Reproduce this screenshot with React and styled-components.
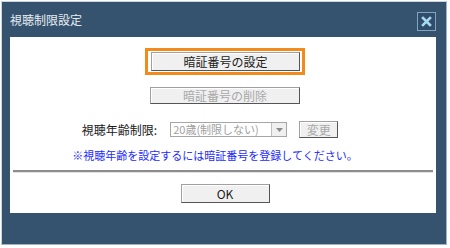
import React from "react";
import styled, { createGlobalStyle } from "styled-components";

const GlobalStyle = createGlobalStyle`
  html, body {
    margin: 0;
    padding: 0;
    background: #ffffff;
  }
  body {
    font-family: "Noto Sans CJK JP", "Noto Sans", sans-serif;
  }
`;

const Page = styled.div`
  padding: 1px 0 0 1px;
`;

const Frame = styled.div`
  width: 446px;
  height: 244px;
  box-sizing: border-box;
  background: #35536e;
  border: 1px solid #9fb3c6;
  border-top-color: #c8d4de;
  border-left-color: #c8d4de;
  padding: 0 10px 0 8px;
  display: flex;
  flex-direction: column;
`;

const TitleBar = styled.div`
  height: 35px;
  display: flex;
  align-items: center;
  justify-content: space-between;
`;

const Title = styled.div`
  color: #e6ecf2;
  font-size: 12px;
  line-height: 1;
  margin-top: 1px;
`;

const CloseButton = styled.div`
  width: 19px;
  height: 19px;
  box-sizing: border-box;
  border: 1px solid #7ea6c2;
  background: #2f4d68;
  display: flex;
  align-items: center;
  justify-content: center;
  margin-top: 4px;
`;

const Panel = styled.div`
  height: 176px;
  background: #ffffff;
  padding-left: 4px;
  display: flex;
  flex-direction: column;
  align-items: center;
  box-sizing: border-box;
`;

const FocusRing = styled.div`
  margin-top: 11px;
  border: 3px solid #f28a1c;
  padding: 1px 2px 1px 3px;
  background: #ffffff;
`;

const Button = styled.div`
  width: ${(p) => p.$w}px;
  height: ${(p) => p.$h}px;
  box-sizing: border-box;
  background: #f0f0f0;
  border: 1px solid #a0a0a0;
  border-right-color: #555555;
  border-bottom-color: #555555;
  box-shadow: inset 1px 1px #ffffff;
  color: ${(p) => (p.$disabled ? "#a8a8a8" : "#1a1a1a")};
  font-size: 12px;
  display: flex;
  align-items: center;
  justify-content: center;
  line-height: 1;
`;

const Spacer = styled.div`
  height: ${(p) => p.$h}px;
`;

const Row = styled.div`
  display: flex;
  align-items: center;
  padding-right: 30px;
  height: 17px;
`;

const Label = styled.div`
  font-size: 12px;
  color: #1a1a1a;
  margin-right: 13px;
`;

const Select = styled.div`
  width: 117px;
  height: 15px;
  box-sizing: border-box;
  border: 1px solid #a6a6a6;
  display: flex;
  align-items: stretch;
  margin-right: 12px;
`;

const SelectText = styled.div`
  flex: 1;
  font-size: 11px;
  color: #a0a0a0;
  line-height: 13px;
  padding-left: 2px;
  white-space: nowrap;
`;

const SelectArrow = styled.div`
  width: 14px;
  border-left: 1px solid #c0c0c0;
  background: #f0f0f0;
  display: flex;
  align-items: center;
  justify-content: center;
`;

const Note = styled.div`
  font-size: 11px;
  color: #1c2bff;
  padding-right: 20px;
  margin-top: 11px;
  line-height: 13px;
  white-space: nowrap;
`;

const Separator = styled.div`
  align-self: stretch;
  margin: 8px 3px 0 -1px;
  height: 2px;
  background: #8c8c8c;
  box-shadow: 0 1px #e2e2e2;
`;

const App = () => {
  return (
    <Page>
      <GlobalStyle />
      <Frame>
        <TitleBar>
          <Title>視聴制限設定</Title>
          <CloseButton>
            <svg width="11" height="11" viewBox="0 0 11 11">
              <path
                d="M2 2 L9 9 M9 2 L2 9"
                stroke="#a6d8f2"
                strokeWidth="2.6"
                strokeLinecap="square"
              />
            </svg>
          </CloseButton>
        </TitleBar>
        <Panel>
          <FocusRing>
            <Button $w={149} $h={19}>暗証番号の設定</Button>
          </FocusRing>
          <Spacer $h={12} />
          <Button $w={150} $h={17} $disabled>
            暗証番号の削除
          </Button>
          <Spacer $h={17} />
          <Row>
            <Label>視聴年齢制限:</Label>
            <Select>
              <SelectText>20歳(制限しない)</SelectText>
              <SelectArrow>
                <svg width="7" height="4" viewBox="0 0 7 4">
                  <path d="M0 0 L7 0 L3.5 4 Z" fill="#8a8a8a" />
                </svg>
              </SelectArrow>
            </Select>
            <Button $w={39} $h={17} $disabled>
              変更
            </Button>
          </Row>
          <Note>※視聴年齢を設定するには暗証番号を登録してください。</Note>
          <Separator />
          <Spacer $h={12} />
          <Button $w={89} $h={19}>OK</Button>
        </Panel>
      </Frame>
    </Page>
  );
};

export default App;
